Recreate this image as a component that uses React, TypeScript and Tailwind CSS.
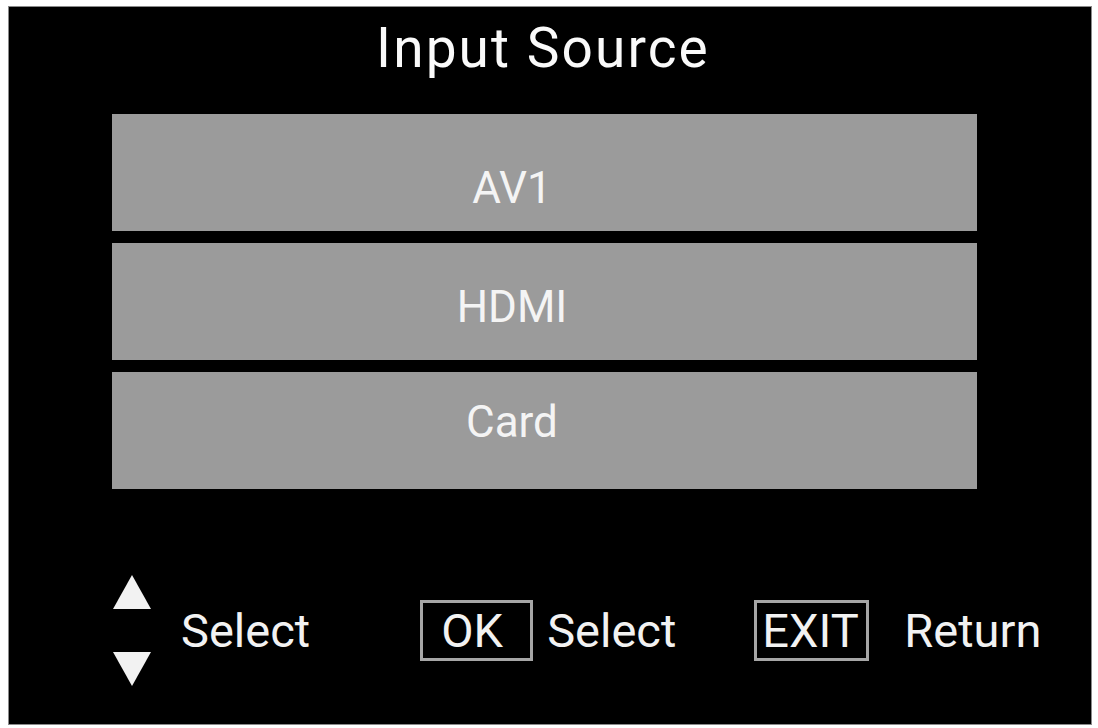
const sources = [
  { label: 'AV1', pad: 'pt-[52px]' },
  { label: 'HDMI', pad: 'pt-[42px]' },
  { label: 'Card', pad: 'pt-[28px]' },
];

function Triangle({ down }: { down?: boolean }) {
  return (
    <svg width="38" height="34" viewBox="0 0 38 34" className="block">
      <polygon
        points={down ? '0,0 38,0 19,34' : '19,0 38,34 0,34'}
        fill="#f2f2f2"
      />
    </svg>
  );
}

export default function App() {
  return (
    <div className="min-h-[728px] w-[1098px] bg-white pt-[6px] pl-[8px] font-['Roboto','Liberation_Sans',sans-serif]">
      <div className="flex h-[719px] w-[1084px] flex-col border border-[#8a8a8a] bg-black">
        <h1 className="pt-[14px] pr-[14px] text-center text-[55px] leading-none tracking-[2.1px] text-[#fafafa]">
          Input Source
        </h1>

        <div className="mt-[38px] ml-[103px] flex w-[865px] flex-col gap-[12px]">
          {sources.map((s) => (
            <div
              key={s.label}
              className={`h-[117px] bg-[#9b9b9b] pr-[65px] text-center text-[44px] leading-none text-[#f4f4f4] ${s.pad}`}
            >
              {s.label}
            </div>
          ))}
        </div>

        <div className="mt-[86px] ml-[104px] flex items-center text-[47px] leading-none text-[#f2f2f2]">
          <div className="flex flex-col gap-[43px]">
            <Triangle />
            <Triangle down />
          </div>
          <span className="ml-[30px]">Select</span>
          <div className="ml-[110px] flex h-[61px] w-[113px] items-center border-[3px] border-[#a6a6a6] pl-[18px]">
            OK
          </div>
          <span className="ml-[14px]">Select</span>
          <div className="ml-[78px] flex h-[61px] w-[115px] items-center border-[3px] border-[#a6a6a6] pl-[5px]">
            EXIT
          </div>
          <span className="ml-[35px]">Return</span>
        </div>
      </div>
    </div>
  );
}
